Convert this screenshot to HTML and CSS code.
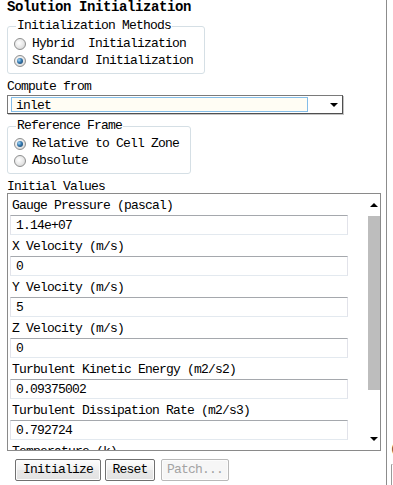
FILE: index.html
```html
<!DOCTYPE html>
<html>
<head>
<meta charset="utf-8">
<link rel="stylesheet" href="styles.css">
</head>
<body>
<div class="frame">
  <div class="main">
    <div class="title">Solution Initialization</div>
    <fieldset class="group g1">
      <legend>Initialization Methods</legend>
      <div class="radio"><span class="dot"></span><span class="rtext">Hybrid  Initialization</span></div>
      <div class="radio"><span class="dot on"></span><span class="rtext">Standard Initialization</span></div>
    </fieldset>
    <div class="lbl">Compute from</div>
    <div class="combo">
      <div class="combo-field">inlet</div>
      <div class="combo-btn"><span class="tri-down"></span></div>
    </div>
    <fieldset class="group g2">
      <legend>Reference Frame</legend>
      <div class="radio"><span class="dot on"></span><span class="rtext">Relative to Cell Zone</span></div>
      <div class="radio"><span class="dot"></span><span class="rtext">Absolute</span></div>
    </fieldset>
    <div class="lbl lbl-iv">Initial Values</div>
    <div class="scrollbox">
      <div class="list">
        <div class="row-lbl">Gauge Pressure (pascal)</div>
        <div class="field">1.14e+07</div>
        <div class="row-lbl">X Velocity (m/s)</div>
        <div class="field">0</div>
        <div class="row-lbl">Y Velocity (m/s)</div>
        <div class="field">5</div>
        <div class="row-lbl">Z Velocity (m/s)</div>
        <div class="field">0</div>
        <div class="row-lbl">Turbulent Kinetic Energy (m2/s2)</div>
        <div class="field">0.09375002</div>
        <div class="row-lbl">Turbulent Dissipation Rate (m2/s3)</div>
        <div class="field">0.792724</div>
        <div class="row-lbl">Temperature (k)</div>
        <div class="field">300</div>
      </div>
      <div class="vscroll">
        <div class="sb-btn"><span class="tri-up"></span></div>
        <div class="sb-track"><div class="sb-thumb"></div></div>
        <div class="sb-btn"><span class="tri-down"></span></div>
      </div>
    </div>
    <div class="buttons">
      <div class="btn btn-init">Initialize</div>
      <div class="btn btn-reset">Reset</div>
      <div class="btn btn-patch disabled">Patch...</div>
    </div>
  </div>
  <div class="side">
    <span class="side-paren">(</span>
    <div class="side-box"></div>
  </div>
</div>
</body>
</html>
```
FILE: styles.css
```css
html, body {
  margin: 0;
  padding: 0;
  background: #ffffff;
}

body {
  font-family: "Liberation Mono", "DejaVu Sans Mono", monospace;
  font-size: 13px;
  letter-spacing: -0.8px;
  color: #000;
}

.frame {
  display: flex;
  width: 393px;
  height: 485px;
  overflow: hidden;
}

.main {
  width: 387px;
  flex: none;
  box-sizing: border-box;
  border-right: 1px solid #8c8c8c;
  padding-left: 7px;
}

.title {
  font-weight: bold;
  font-size: 14px;
  letter-spacing: -0.4px;
  line-height: 15px;
  height: 15px;
  white-space: pre;
}

.group {
  margin: 0;
  border: 1px solid #d5dfe5;
  border-radius: 3px;
  padding: 2px 6px 4px 6px;
  box-sizing: border-box;
  min-width: 0;
}

.group legend {
  padding: 0 1px;
  margin-left: 2px;
  line-height: 14px;
  height: 14px;
  white-space: pre;
}

.g1 {
  margin-top: 4px;
  width: 198px;
}

.g2 {
  margin-top: 5px;
  width: 184px;
}

.radio {
  display: flex;
  align-items: center;
  height: 17px;
  line-height: 17px;
}

.rtext {
  white-space: pre;
  margin-left: 6px;
}

.dot {
  width: 12px;
  height: 12px;
  box-sizing: border-box;
  border-radius: 50%;
  border: 1px solid #8e8f8f;
  background: radial-gradient(circle at 40% 40%, #ffffff 0%, #e6e6e6 55%, #c9c9c9 100%);
  display: grid;
  place-items: center;
  flex: none;
}

.dot.on::after {
  content: "";
  width: 6px;
  height: 6px;
  border-radius: 50%;
  background: radial-gradient(circle at 35% 35%, #a6d8f7 0%, #3577ad 45%, #12385a 100%);
}

.lbl {
  margin-top: 6px;
  line-height: 14px;
  height: 14px;
  white-space: pre;
}

.lbl-iv {
  line-height: 13px;
  height: 13px;
}

.combo {
  margin-top: 1px;
  width: 336px;
  height: 19px;
  box-sizing: border-box;
  border: 1px solid #7a7a7a;
  border-right-color: #4f4f4f;
  border-bottom-color: #4f4f4f;
  box-shadow: 1px 1px 0 #c4c4c4;
  padding: 1px 0 1px 3px;
  display: flex;
  background: #fff;
}

.combo-field {
  width: 297px;
  height: 15px;
  box-sizing: border-box;
  border: 1px solid #84bde8;
  background: #fffdf4;
  padding: 1px 0 0 4px;
  line-height: 14px;
  white-space: pre;
}

.combo-btn {
  flex: 1;
  display: flex;
  align-items: center;
  justify-content: flex-end;
  padding-right: 4px;
}

.tri-down,
.tri-up {
  width: 0;
  height: 0;
  border-left: 4px solid transparent;
  border-right: 4px solid transparent;
}

.tri-down {
  border-top: 4px solid #000;
}

.tri-up {
  border-bottom: 4px solid #000;
}

.scrollbox {
  width: 374px;
  height: 258px;
  box-sizing: border-box;
  border: 1px solid #8a8a8a;
  display: grid;
  grid-template-columns: 1fr 12px;
  overflow: hidden;
}

.list {
  padding-left: 2px;
  overflow: hidden;
}

.row-lbl {
  height: 21px;
  box-sizing: border-box;
  padding: 3px 0 0 2px;
  line-height: 17px;
  white-space: pre;
}

.field {
  width: 338px;
  height: 20px;
  box-sizing: border-box;
  border: 1px solid #e2e3ea;
  border-top-color: #a5a8ad;
  border-bottom-color: #e3e9ef;
  padding: 1px 0 0 5px;
  line-height: 18px;
  white-space: pre;
}

.vscroll {
  display: flex;
  flex-direction: column;
}

.sb-btn {
  height: 22px;
  flex: none;
  display: flex;
  align-items: center;
  justify-content: center;
}

.sb-track {
  flex: 1;
}

.sb-thumb {
  height: 174px;
  background: #bdbdbd;
}

.buttons {
  margin-top: 8px;
  display: flex;
  padding-left: 8px;
}

.btn {
  height: 22px;
  box-sizing: border-box;
  border: 1px solid #707070;
  border-radius: 2px;
  background: linear-gradient(#fdfdfd, #f0f0f0 50%, #e8e8e8 50%, #e2e2e2);
  box-shadow: inset 0 0 0 1px #fcfcfc;
  display: flex;
  align-items: center;
  justify-content: center;
  line-height: 20px;
  white-space: pre;
}

.btn-init {
  width: 86px;
}

.btn-reset {
  width: 50px;
  margin-left: 4px;
}

.btn-patch {
  width: 68px;
  margin-left: 6px;
}

.btn.disabled {
  color: #a3a3a3;
  border-color: #b8b8b8;
  background: #f6f6f6;
}

.side {
  flex: 1;
  display: flex;
  flex-direction: column;
  justify-content: flex-end;
  padding-left: 3px;
}

.side-paren {
  line-height: 14px;
  color: #333;
}

.side-box {
  margin-top: 8px;
  margin-left: 1px;
  height: 20px;
  border-left: 1px solid #9a9a9a;
  border-top: 1px solid #d0d0d0;
}
```
